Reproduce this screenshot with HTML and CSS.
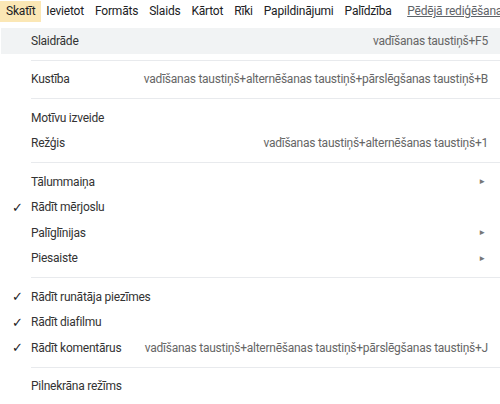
FILE: index.html
```html
<!DOCTYPE html>
<html lang="lv">
  <head>
    <meta charset="UTF-8" />
    <title>Skatīt</title>
    <link rel="stylesheet" href="styles.css">
  </head>
  <body>
    <div class="menubar">
      <span class="menubar-item active">Skatīt</span>
      <span class="menubar-item">Ievietot</span>
      <span class="menubar-item">Formāts</span>
      <span class="menubar-item">Slaids</span>
      <span class="menubar-item">Kārtot</span>
      <span class="menubar-item">Rīki</span>
      <span class="menubar-item">Papildinājumi</span>
      <span class="menubar-item">Palīdzība</span>
      <span class="last-edit">Pēdējā rediģēšana tika veikta pirms dažām sekundēm</span>
    </div>

    <div class="menu">
      <div class="item hover">
        <span class="check"></span>
        <span class="label">Slaidrāde</span>
        <span class="shortcut">vadīšanas taustiņš+F5</span>
      </div>
      <div class="sep"></div>
      <div class="item">
        <span class="check"></span>
        <span class="label">Kustība</span>
        <span class="shortcut">vadīšanas taustiņš+alternēšanas taustiņš+pārslēgšanas taustiņš+B</span>
      </div>
      <div class="sep"></div>
      <div class="item">
        <span class="check"></span>
        <span class="label">Motīvu izveide</span>
      </div>
      <div class="item">
        <span class="check"></span>
        <span class="label">Režģis</span>
        <span class="shortcut">vadīšanas taustiņš+alternēšanas taustiņš+1</span>
      </div>
      <div class="sep"></div>
      <div class="item">
        <span class="check"></span>
        <span class="label">Tālummaiņa</span>
        <span class="arrow">&#9658;</span>
      </div>
      <div class="item">
        <span class="check">&#10003;</span>
        <span class="label">Rādīt mērjoslu</span>
      </div>
      <div class="item">
        <span class="check"></span>
        <span class="label">Palīglīnijas</span>
        <span class="arrow">&#9658;</span>
      </div>
      <div class="item">
        <span class="check"></span>
        <span class="label">Piesaiste</span>
        <span class="arrow">&#9658;</span>
      </div>
      <div class="sep"></div>
      <div class="item">
        <span class="check">&#10003;</span>
        <span class="label">Rādīt runātāja piezīmes</span>
      </div>
      <div class="item">
        <span class="check">&#10003;</span>
        <span class="label">Rādīt diafilmu</span>
      </div>
      <div class="item">
        <span class="check">&#10003;</span>
        <span class="label">Rādīt komentārus</span>
        <span class="shortcut">vadīšanas taustiņš+alternēšanas taustiņš+pārslēgšanas taustiņš+J</span>
      </div>
      <div class="sep"></div>
      <div class="item">
        <span class="check"></span>
        <span class="label">Pilnekrāna režīms</span>
      </div>
    </div>
  </body>
</html>
```

FILE: styles.css
```css
body {
  margin: 0;
  font-family: Roboto, "Noto Sans", sans-serif;
  background-color: #fff;
  color: #333;
  width: 500px;
  height: 404px;
  overflow: hidden;
}
.menubar {
  display: flex;
  align-items: center;
  height: 22px;
  font-size: 12px;
  letter-spacing: -0.2px;
  white-space: nowrap;
  overflow: hidden;
  color: #202124;
}
.menubar-item {
  padding: 0 5.5px;
  line-height: 21px;
}
.menubar-item.active {
  background-color: #fbe7b5;
  padding-left: 6px;
}
.last-edit {
  margin-left: 10px;
  color: #5f6368;
  text-decoration: underline;
}
.menu {
  padding-top: 6px;
  font-size: 12px;
  letter-spacing: -0.25px;
}
.item {
  display: flex;
  align-items: center;
  height: 25.5px;
  padding-right: 12px;
  margin-left: 1px;
  white-space: nowrap;
}
.item.hover {
  background-color: #f1f3f4;
}
.check {
  width: 30px;
  flex-shrink: 0;
  text-align: center;
  font-size: 13px;
  color: #202124;
  padding-left: 2px;
  box-sizing: border-box;
}
.label {
  flex-grow: 1;
}
.shortcut {
  color: #666;
  padding-left: 12px;
}
.arrow {
  color: #777;
  font-size: 8px;
  padding-right: 2px;
}
.sep {
  height: 1px;
  background-color: #e8eaed;
  margin: 6px 0 6px 31px;
}
```
